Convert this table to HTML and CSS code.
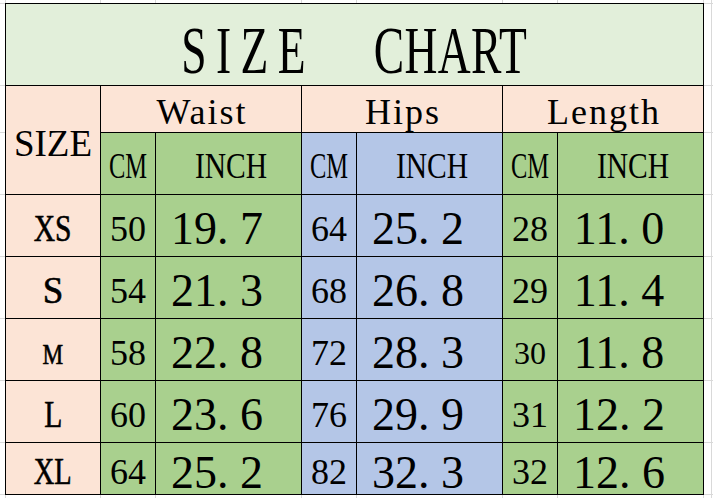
FILE: index.html
```html
<!DOCTYPE html>
<html lang="en">
<head>
<meta charset="utf-8">
<title>Size Chart</title>
<link rel="stylesheet" href="styles.css">
</head>
<body>
<div class="sheet">
  <div class="g"></div><div class="g"></div><div class="g"></div><div class="g"></div><div class="g"></div>
  <div class="g"></div><div class="g"></div><div class="g"></div><div class="g"></div><div class="g"></div>

  <div class="g"></div>
  <div class="c title"><span class="title-text"><span class="t1">SIZE</span><span class="t2">CHART</span></span></div>
  <div class="g"></div><div class="g"></div>

  <div class="g"></div>
  <div class="c peach size-head">SIZE</div>
  <div class="c peach group">Waist</div>
  <div class="c peach group">Hips</div>
  <div class="c peach group">Length</div>
  <div class="g"></div><div class="g"></div>

  <div class="g"></div>
  <div class="c green unit"><span class="cm-h">CM</span></div>
  <div class="c green unit inch"><span class="inch-h">INCH</span></div>
  <div class="c blue unit"><span class="cm-h">CM</span></div>
  <div class="c blue unit inch"><span class="inch-h">INCH</span></div>
  <div class="c green unit"><span class="cm-h">CM</span></div>
  <div class="c green unit inch"><span class="inch-h">INCH</span></div>
  <div class="g"></div><div class="g"></div>

  <div class="g"></div>
  <div class="c peach label"><span class="sx-xs">XS</span></div>
  <div class="c green val">50</div>
  <div class="c green big">19<span class="dot">.</span>7</div>
  <div class="c blue val">64</div>
  <div class="c blue big">25<span class="dot">.</span>2</div>
  <div class="c green val">28</div>
  <div class="c green big">11<span class="dot">.</span>0</div>
  <div class="g"></div><div class="g"></div>

  <div class="g"></div>
  <div class="c peach label"><span>S</span></div>
  <div class="c green val">54</div>
  <div class="c green big">21<span class="dot">.</span>3</div>
  <div class="c blue val">68</div>
  <div class="c blue big">26<span class="dot">.</span>8</div>
  <div class="c green val">29</div>
  <div class="c green big">11<span class="dot">.</span>4</div>
  <div class="g"></div><div class="g"></div>

  <div class="g"></div>
  <div class="c peach label label-m"><span class="sx-m">M</span></div>
  <div class="c green val">58</div>
  <div class="c green big">22<span class="dot">.</span>8</div>
  <div class="c blue val">72</div>
  <div class="c blue big">28<span class="dot">.</span>3</div>
  <div class="c green val val-sm">30</div>
  <div class="c green big">11<span class="dot">.</span>8</div>
  <div class="g"></div><div class="g"></div>

  <div class="g"></div>
  <div class="c peach label"><span class="sx-l">L</span></div>
  <div class="c green val">60</div>
  <div class="c green big">23<span class="dot">.</span>6</div>
  <div class="c blue val">76</div>
  <div class="c blue big">29<span class="dot">.</span>9</div>
  <div class="c green val">31</div>
  <div class="c green big">12<span class="dot">.</span>2</div>
  <div class="g"></div><div class="g"></div>

  <div class="g"></div>
  <div class="c peach label"><span class="sx-xl">XL</span></div>
  <div class="c green val">64</div>
  <div class="c green big big-last">25<span class="dot">.</span>2</div>
  <div class="c blue val">82</div>
  <div class="c blue big big-last">32<span class="dot">.</span>3</div>
  <div class="c green val">32</div>
  <div class="c green big big-last">12<span class="dot">.</span>6</div>
  <div class="g"></div><div class="g"></div>

  <div class="g"></div><div class="g"></div><div class="g"></div><div class="g"></div><div class="g"></div>
  <div class="g"></div><div class="g"></div><div class="g"></div><div class="g"></div><div class="g"></div>
</div>
</body>
</html>
```

FILE: styles.css
```css
html, body {
  margin: 0;
  padding: 0;
  background: #ffffff;
}

body {
  font-family: "Liberation Serif", "Times New Roman", serif;
  color: #000000;
}

.sheet {
  display: grid;
  width: 713px;
  height: 498px;
  overflow: hidden;
  grid-template-columns: 5px 94px 54px 145px 54px 145px 54px 145px 7px 1fr;
  grid-template-rows: 3px 81px 46px 61px 61px 61px 61px 61px 51px 1fr;
  gap: 1px;
  background: #d9d9d9;
}

.g {
  background: #ffffff;
}

.c {
  display: flex;
  align-items: center;
  justify-content: center;
  box-shadow: 0 0 0 1px #000000;
  line-height: 1;
  white-space: nowrap;
  min-width: 0;
  min-height: 0;
}

.peach { background: #fce4d6; }
.green { background: #a9d08e; }
.blue { background: #b4c6e7; }

.title {
  grid-column: span 7;
  background: #e2efda;
  font-size: 68px;
  padding-top: 11px;
}

.title-text {
  display: inline-flex;
  gap: 88px;
  transform: scaleX(0.67);
}

.t1 { letter-spacing: 14px; }
.t2 { letter-spacing: 0.5px; }

.size-head {
  grid-row: span 2;
  font-size: 37px;
  padding-top: 6px;
}

.group {
  grid-column: span 2;
  font-size: 36px;
  letter-spacing: 2px;
  padding-top: 6px;
  padding-left: 2px;
}

.unit {
  font-size: 36px;
  padding-top: 4px;
}

.unit span { display: inline-block; }

.cm-h { transform: scaleX(0.68); }
.inch-h { transform: scaleX(0.82); }
.inch { padding-left: 4px; }

.label {
  font-size: 37px;
  padding-top: 5px;
  -webkit-text-stroke: 0.6px #000000;
}

.label span { display: inline-block; }

.sx-xs { transform: scaleX(0.8); }
.sx-l { transform: scaleX(0.8); }
.sx-xl { transform: scaleX(0.77); }
.sx-m { font-size: 29px; transform: scaleX(0.8); }
.label-m { padding-top: 9px; }

.val {
  font-size: 36px;
  padding-top: 6px;
}

.val-sm { font-size: 32px; }

.big {
  font-size: 46px;
  padding-top: 7px;
  padding-right: 23px;
}

.big-last { padding-top: 8px; }

.dot { margin-right: 11.5px; }
```
